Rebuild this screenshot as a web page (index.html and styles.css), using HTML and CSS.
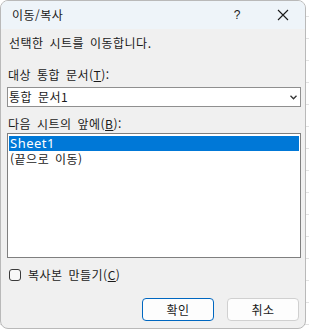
FILE: index.html
```html
<!DOCTYPE html>
<html lang="ko">
<head>
<meta charset="utf-8">
<link rel="stylesheet" href="styles.css">
</head>
<body>
<div class="dialog">
  <div class="titlebar">
    <span class="title">이동/복사</span>
    <span class="help">?</span>
    <span class="close"><svg width="12" height="12" viewBox="0 0 12 12"><path d="M1 1L11 11M11 1L1 11" stroke="#1a1a1a" stroke-width="1.1" fill="none"/></svg></span>
  </div>
  <div class="content">
    <div class="intro">선택한 시트를 이동합니다.</div>
    <div class="label">대상 통합 문서(<u>T</u>):</div>
    <div class="combo">
      <span class="combo-text">통합 문서1</span>
      <svg class="chev" width="7" height="5" viewBox="0 0 7 5"><path d="M0.5 0.8L3.5 3.8L6.5 0.8" stroke="#333" stroke-width="1.3" fill="none"/></svg>
    </div>
    <div class="label label2">다음 시트의 앞에(<u>B</u>):</div>
    <div class="list">
      <div class="item latin selected">Sheet1</div>
      <div class="item">(끝으로 이동)</div>
    </div>
    <label class="check-row">
      <span class="checkbox"></span>
      <span class="check-label">복사본 만들기(<u>C</u>)</span>
    </label>
    <div class="buttons">
      <button class="btn primary">확인</button>
      <button class="btn">취소</button>
    </div>
  </div>
</div>
</body>
</html>
```

FILE: styles.css
```css
html, body {
  margin: 0;
  padding: 0;
}
body {
  width: 309px;
  height: 333px;
  background-color: #ffffff;
  background-image:
    repeating-linear-gradient(to bottom, transparent 0, transparent 16px, #e2e2e2 16px, #e2e2e2 17px, transparent 17px, transparent 22px);
  font-family: "Noto Sans CJK KR", "Noto Sans", sans-serif;
  font-size: 12px;
  color: #1a1a1a;
  overflow: hidden;
}
.dialog {
  box-sizing: border-box;
  width: 306px;
  height: 329px;
  border: 1px solid #b9b9b9;
  border-radius: 8px;
  background: #f0f0f0;
  overflow: hidden;
  display: flex;
  flex-direction: column;
}
.titlebar {
  height: 28px;
  background: #eef4f9;
  display: flex;
  align-items: center;
  padding-left: 11px;
  line-height: 16px;
}
.title {
  flex: 1;
  font-size: 12px;
  letter-spacing: 0.5px;
}
.help {
  width: 12px;
  font-family: "Liberation Sans", sans-serif;
  font-size: 12px;
  margin-right: 34px;
  text-align: center;
}
.close {
  width: 12px;
  height: 12px;
  margin-right: 16px;
  display: flex;
}
.content {
  padding: 0 4px 0 6px;
  display: flex;
  flex-direction: column;
  letter-spacing: 0.5px;
  word-spacing: 2px;
}
.intro {
  line-height: 16px;
  margin-top: 6px;
  padding-left: 2px;
}
.label {
  line-height: 16px;
  margin-top: 16px;
  padding-left: 1px;
}
.label u, .check-label u {
  text-decoration: underline;
  text-underline-offset: 1px;
}
.combo {
  box-sizing: border-box;
  margin-top: 4px;
  height: 20px;
  background: #ffffff;
  border: 1px solid #8f8f8f;
  display: flex;
  align-items: center;
  padding-left: 1px;
  padding-right: 3px;
}
.combo-text {
  flex: 1;
  line-height: 16px;
}
.chev {
  display: block;
}
.label2 {
  margin-top: 9px;
}
.list {
  box-sizing: border-box;
  margin-top: 1px;
  height: 125px;
  background: #ffffff;
  border: 1px solid #7f7f7f;
  padding: 2px 1px;
}
.item {
  height: 15px;
  line-height: 15px;
  padding-left: 1px;
}
.item.latin {
  font-family: "Noto Sans", sans-serif;
  font-size: 13px;
}
.selected {
  background: #0078d7;
  color: #ffffff;
}
.check-row {
  margin-top: 9px;
  height: 16px;
  display: flex;
  align-items: center;
  padding-left: 2px;
}
.checkbox {
  box-sizing: border-box;
  width: 12px;
  height: 12px;
  border: 1px solid #3a3a3a;
  border-radius: 3px;
  background: #f7f7f7;
  margin-right: 7px;
}
.check-label {
  line-height: 16px;
}
.buttons {
  margin-top: 15px;
  display: flex;
  justify-content: flex-end;
  gap: 13px;
  padding-right: 2px;
}
.btn {
  box-sizing: border-box;
  width: 72px;
  height: 23px;
  border: 1px solid #d0d0d0;
  border-radius: 4px;
  background: #fdfdfd;
  font-family: "Noto Sans CJK KR", sans-serif;
  font-size: 12px;
  letter-spacing: 0.5px;
  color: #1a1a1a;
  padding: 0;
  line-height: 16px;
}
.btn.primary {
  border-color: #0067c0;
}
```
